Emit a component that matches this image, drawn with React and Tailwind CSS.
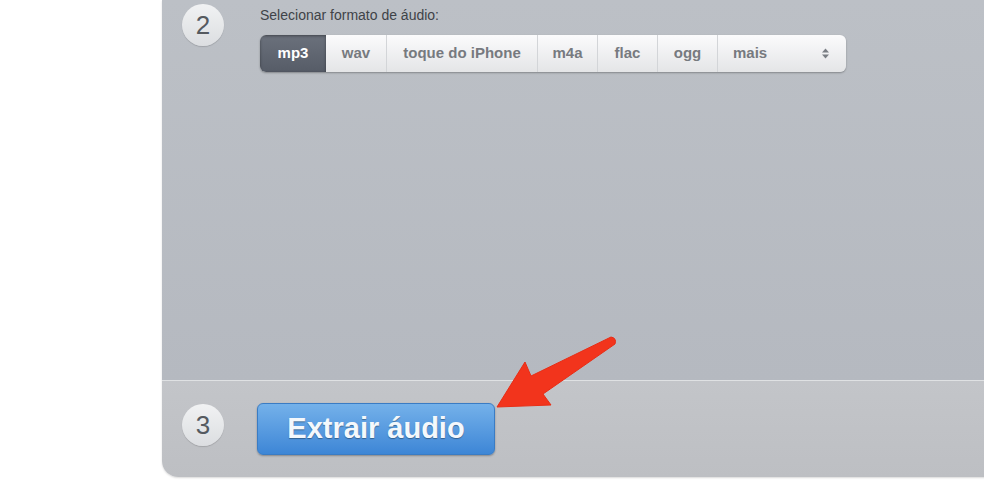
import React from "react";

const formats = [
    { label: "mp3", w: "w-[66px]", active: true },
    { label: "wav", w: "w-[61px]" },
    { label: "toque do iPhone", w: "w-[151px]" },
    { label: "m4a", w: "w-[60px]" },
    { label: "flac", w: "w-[60px]" },
    { label: "ogg", w: "w-[60px]" },
];

function StepNumber({ n }) {
    return (
        <div className="shrink-0 w-[42px] h-[42px] rounded-full bg-gradient-to-b from-[#f1f2f3] to-[#dcdee1] shadow-[0_1px_1px_rgba(0,0,0,0.15)] flex items-center justify-center text-[26px] text-[#555a60] font-light">
            {n}
        </div>
    );
}

export default function App() {
    return (
        <div
            className="relative w-[984px] h-[504px] bg-white overflow-hidden"
            style={{ fontFamily: '"Liberation Sans", Arial, sans-serif' }}
        >
            <div className="ml-[162px] w-[860px] h-[477px] rounded-bl-[16px] overflow-hidden flex flex-col shadow-[0_1px_2px_rgba(0,0,0,0.15)]">
                {/* STEP 2 */}
                <section className="h-[380px] bg-gradient-to-b from-[#bcc0c6] to-[#b5b9c0] flex gap-[36px] pl-[20px] pt-[4px]">
                    <StepNumber n="2" />
                    <div>
                        <p className="text-[14px] text-[#3f4348] leading-[16px] pt-[3px]">
                            Selecionar formato de áudio:
                        </p>
                        <div className="mt-[12px] flex h-[37px] w-[586px] rounded-[6px] bg-gradient-to-b from-[#fbfbfc] to-[#e4e5e7] shadow-[0_1px_2px_rgba(0,0,0,0.3)] overflow-hidden">
                            {formats.map((f) => (
                                <div
                                    key={f.label}
                                    className={
                                        f.active
                                            ? `${f.w} flex items-center justify-center text-[15px] font-bold text-white bg-gradient-to-b from-[#6b717c] to-[#565c67] shadow-[inset_0_1px_3px_rgba(0,0,0,0.4)]`
                                            : `${f.w} flex items-center justify-center text-[15px] font-bold text-[#777a7f] border-r border-[#d3d5d8]`
                                    }
                                >
                                    {f.label}
                                </div>
                            ))}
                            <div className="flex-1 flex items-center justify-between pl-[15px] pr-[16px] text-[15px] font-bold text-[#777a7f]">
                                <span>mais</span>
                                <svg width="9" height="13" viewBox="0 0 9 13">
                                    <path d="M1 5.5 L4.5 1.5 L8 5.5 Z" fill="#7a7e84" />
                                    <path d="M1 7.5 L4.5 11.5 L8 7.5 Z" fill="#7a7e84" />
                                </svg>
                            </div>
                        </div>
                    </div>
                </section>

                {/* STEP 3 */}
                <section className="flex-1 bg-gradient-to-b from-[#c3c5c9] to-[#bdbfc3] border-t border-[#dfe1e3] flex items-start gap-[33px] pl-[20px] pt-[23px]">
                    <StepNumber n="3" />
                    <button className="-mt-[1px] w-[238px] h-[52px] rounded-[6px] bg-gradient-to-b from-[#74b1ea] to-[#3d86d6] border border-[#3a7cc4] shadow-[0_1px_2px_rgba(0,0,0,0.3)] text-[#f4f8fc] text-[29px] font-bold [text-shadow:0_1px_1px_rgba(0,0,0,0.35)]">
                        Extrair áudio
                    </button>
                </section>
            </div>

            {/* red arrow overlay */}
            <svg className="absolute left-0 top-0" width="984" height="504" viewBox="0 0 984 504">
                <path
                    d="M497 407 L525 362 L531 376 L611 337 Q617 338 615 344 L543 394 L551 405 Z"
                    fill="#f2341c"
                    stroke="#e82d15"
                    strokeWidth="1"
                    strokeLinejoin="round"
                />
            </svg>
        </div>
    );
}
